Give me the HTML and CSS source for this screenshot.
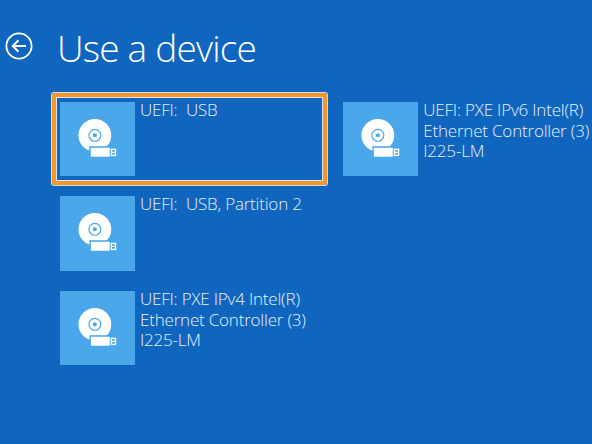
FILE: index.html
```html
<!DOCTYPE html>
<html lang="en">
<head>
<meta charset="utf-8">
<title>Use a device</title>
<link rel="stylesheet" href="styles.css">
</head>
<body>
<svg width="0" height="0" class="defs">
  <symbol id="usb" viewBox="0 0 75 75">
    <circle cx="35" cy="33.5" r="16.5" fill="#fff"/>
    <circle cx="35" cy="33.5" r="6" fill="none" stroke="#4aa8ea" stroke-width="1.2"/>
    <circle cx="35" cy="33.5" r="2" fill="#4aa8ea"/>
    <rect x="29.5" y="44.5" width="21" height="12" fill="#4aa8ea"/>
    <rect x="31" y="46" width="19" height="9" rx="0.5" fill="#fff"/>
    <rect x="51" y="47" width="5.5" height="7.5" fill="#fff"/>
    <rect x="52.4" y="48.3" width="2.8" height="1.8" fill="#4aa8ea"/>
    <rect x="52.4" y="51.3" width="2.8" height="1.8" fill="#4aa8ea"/>
  </symbol>
</svg>
<main class="screen">
  <header class="head">
    <svg class="back" viewBox="0 0 28 28" width="28" height="28" aria-label="Back">
      <circle cx="14" cy="14" r="12.6" fill="none" stroke="#fff" stroke-width="1.8"/>
      <path d="M21 14H8M13.5 8.2 7.7 14l5.8 5.8" fill="none" stroke="#fff" stroke-width="2"/>
    </svg>
    <h1 class="title">Use a device</h1>
  </header>
  <div class="options">
    <div class="col col-left">
      <div class="option selected">
        <svg class="tile"><use href="#usb"/></svg>
        <div class="label">UEFI:&nbsp; USB</div>
      </div>
      <div class="option">
        <svg class="tile"><use href="#usb"/></svg>
        <div class="label label-up">UEFI:&nbsp; USB, Partition 2</div>
      </div>
      <div class="option">
        <svg class="tile"><use href="#usb"/></svg>
        <div class="label">UEFI: PXE IPv4 Intel(R)<br>Ethernet Controller (3)<br>I225-LM</div>
      </div>
    </div>
    <div class="col col-right">
      <div class="option">
        <svg class="tile"><use href="#usb"/></svg>
        <div class="label">UEFI: PXE IPv6 Intel(R)<br>Ethernet Controller (3)<br>I225-LM</div>
      </div>
    </div>
  </div>
</main>
</body>
</html>
```
FILE: styles.css
```css
html, body {
  margin: 0;
  padding: 0;
  background: #1065bf;
}
.defs {
  position: absolute;
}
.screen {
  width: 592px;
  height: 444px;
  overflow: hidden;
  box-sizing: border-box;
  padding: 0 0 0 5px;
  color: #fff;
  font-family: "Open Sans", "Noto Sans", sans-serif;
  font-weight: 300;
}
.head {
  display: flex;
  align-items: center;
  height: 92px;
  box-sizing: border-box;
}
.back {
  width: 28px;
  height: 28px;
  margin-right: 24px;
  flex: none;
}
.title {
  margin: 3px 0 0;
  font-size: 37px;
  letter-spacing: -0.8px;
  line-height: 46px;
  font-weight: 300;
}
.options {
  display: flex;
  padding-top: 9.7px;
}
.col-left {
  width: 338.3px;
  padding-left: 55px;
  box-sizing: border-box;
  display: flex;
  flex-direction: column;
  gap: 20px;
}
.option {
  display: flex;
  gap: 5.3px;
  position: relative;
  height: 74.5px;
}
.option.selected::before {
  content: "";
  position: absolute;
  left: -8px;
  top: -9px;
  width: 275px;
  height: 92px;
  box-sizing: border-box;
  border: 4px solid #f7962b;
  outline: 1px solid #d9e4ee;
  outline-offset: -5px;
  border-radius: 2px;
  box-shadow: 0 0 0 1px #cfdcea;
}
.tile {
  width: 74.7px;
  height: 74.5px;
  background: #4aa8ea;
  flex: none;
}
.label {
  font-size: 17px;
  letter-spacing: -0.2px;
  line-height: 20.4px;
  margin-top: -1.5px;
  color: #e6f1fb;
  white-space: nowrap;
}
.label-up {
  margin-top: -2.5px;
}
```
